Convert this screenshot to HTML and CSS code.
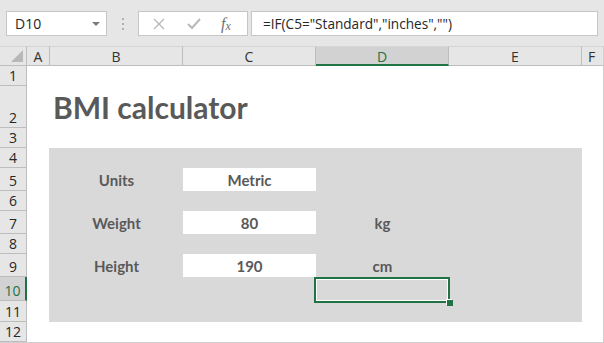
FILE: index.html
```html
<!DOCTYPE html>
<html>
<head>
<meta charset="utf-8">
<link rel="stylesheet" href="styles.css">
</head>
<body>
<div class="app">
  <div class="toolbar">
    <div class="namebox"><span class="nb-text">D10</span><span class="caret"></span></div>
    <div class="grip"><i></i><i></i><i></i></div>
    <div class="fbtns">
      <svg class="ico" width="12" height="12" viewBox="0 0 12 12"><path d="M1 1 L11 11 M11 1 L1 11" stroke="#b9b9b9" stroke-width="1.4" fill="none"/></svg>
      <svg class="ico" width="14" height="12" viewBox="0 0 14 12"><path d="M1 6 L5 10 L13 1" stroke="#b9b9b9" stroke-width="2" fill="none"/></svg>
      <span class="fx">f<span class="fx-x">x</span></span>
    </div>
    <div class="formula">=IF(C5="Standard","inches","")</div>
  </div>
  <div class="sheet">
    <div class="corner"><span class="tri"></span></div>
    <div class="ch">A</div>
    <div class="ch">B</div>
    <div class="ch">C</div>
    <div class="ch ch-sel">D</div>
    <div class="ch">E</div>
    <div class="ch ch-last">F</div>

    <div class="rh r1">1</div>
    <div class="rh r2">2</div>
    <div class="rh r3">3</div>
    <div class="rh r4">4</div>
    <div class="rh r5">5</div>
    <div class="rh r6">6</div>
    <div class="rh r7">7</div>
    <div class="rh r8">8</div>
    <div class="rh r9">9</div>
    <div class="rh r10 rh-sel">10</div>
    <div class="rh r11">11</div>
    <div class="rh r12">12</div>

    <div class="title">BMI calculator</div>
    <div class="panel"></div>

    <div class="cell label row5">Units</div>
    <div class="cell input row5">Metric</div>
    <div class="cell label row7">Weight</div>
    <div class="cell input row7">80</div>
    <div class="cell unit row7">kg</div>
    <div class="cell label row9">Height</div>
    <div class="cell input row9">190</div>
    <div class="cell unit row9">cm</div>

    <div class="selection"><span class="handle"></span></div>
  </div>
</div>
</body>
</html>
```

FILE: styles.css
```css
* { box-sizing: border-box; }
html, body { margin: 0; padding: 0; }
body { width: 604px; height: 343px; overflow: hidden; background: #ffffff; }
.app { width: 604px; height: 343px; display: flex; flex-direction: column; }

.toolbar {
  height: 46px;
  background: #e6e6e6;
  display: flex;
  align-items: flex-start;
  padding: 11px 0 0 6px;
}
.namebox {
  width: 101px;
  height: 25px;
  background: #fff;
  border: 1px solid #c6c6c6;
  display: flex;
  align-items: center;
  justify-content: space-between;
  padding: 0 5px 0 8px;
  font-family: "Open Sans", "Noto Sans", sans-serif;
  font-size: 14px;
  color: #262626;
}
.caret {
  width: 0; height: 0;
  border-left: 4px solid transparent;
  border-right: 4px solid transparent;
  border-top: 4px solid #7a7a7a;
  margin-right: 1px;
}
.grip {
  width: 31px;
  height: 25px;
  display: flex;
  flex-direction: column;
  align-items: center;
  justify-content: center;
  gap: 3px;
}
.grip i { display: block; width: 2px; height: 2px; background: #b0b0b0; }
.fbtns {
  width: 110px;
  height: 25px;
  background: #fff;
  border: 1px solid #c6c6c6;
  display: flex;
  align-items: center;
  padding: 0 0 0 14px;
}
.fbtns .ico:first-child { margin-right: 22px; }
.fbtns .ico:nth-child(2) { margin-right: 20px; }
.fx {
  font-family: "Liberation Serif", serif;
  font-style: italic;
  font-size: 16px;
  color: #6f6f6f;
}
.fx-x { font-size: 12px; position: relative; top: 1px; }
.formula {
  margin-left: 3px;
  width: 347px;
  height: 25px;
  background: #fff;
  border: 1px solid #c6c6c6;
  display: flex;
  align-items: center;
  padding-left: 11px;
  font-family: "Open Sans", "Noto Sans", sans-serif;
  font-size: 13.6px;
  color: #262626;
  white-space: nowrap;
}

.sheet {
  display: grid;
  grid-template-columns: 27px 23px 133px 133px 133px 133px 21px;
  grid-template-rows: 20px 20px 42px 20px 20px 23px 20px 23px 20px 23px 24px 21px 20px;
  width: 604px;
  border-right: 1px solid #d0d0d0;
  border-bottom: 1px solid #d0d0d0;
  font-family: "Open Sans", "Noto Sans", sans-serif;
}
.corner {
  grid-row: 1; grid-column: 1;
  background: #e6e6e6;
  border-right: 1px solid #bdbdbd;
  border-bottom: 1px solid #bdbdbd;
  border-top: 1px solid #d6d6d6;
  position: relative;
}
.tri {
  position: absolute;
  right: 3px; bottom: 3px;
  width: 0; height: 0;
  border-left: 12px solid transparent;
  border-bottom: 12px solid #b8b8b8;
}
.ch {
  grid-row: 1;
  background: #e6e6e6;
  border-right: 1px solid #bdbdbd;
  border-bottom: 1px solid #bdbdbd;
  border-top: 1px solid #d6d6d6;
  display: flex;
  align-items: center;
  justify-content: center;
  font-size: 14px;
  color: #333;
  padding-top: 1px;
}
.ch-last { border-right: none; justify-content: flex-start; padding-left: 6px; }
.ch-sel {
  background: #d2d2d2;
  color: #217346;
  border-bottom: 2px solid #217346;
}
.rh {
  grid-column: 1;
  background: #e6e6e6;
  border-right: 1px solid #bdbdbd;
  border-bottom: 1px solid #bdbdbd;
  display: flex;
  align-items: flex-end;
  justify-content: center;
  font-size: 14px;
  color: #262626;
  padding-bottom: 0;
  line-height: 18px;
}
.r1 { grid-row: 2; } .r2 { grid-row: 3; } .r3 { grid-row: 4; }
.r4 { grid-row: 5; } .r5 { grid-row: 6; } .r6 { grid-row: 7; }
.r7 { grid-row: 8; } .r8 { grid-row: 9; } .r9 { grid-row: 10; }
.r10 { grid-row: 11; } .r11 { grid-row: 12; } .r12 { grid-row: 13; }
.rh-sel {
  background: #d2d2d2;
  color: #217346;
  border-right: 2px solid #217346;
}

.title {
  grid-row: 3;
  grid-column: 3 / 6;
  align-self: end;
  padding: 0 0 3px 3px;
  font-family: "Lato", "Open Sans", sans-serif;
  font-weight: 700;
  font-size: 30px;
  line-height: 36px;
  color: #595959;
}
.panel {
  grid-row: 5 / 13;
  grid-column: 3 / 7;
  background: #d9d9d9;
  margin-left: -1px;
}
.cell {
  display: flex;
  align-items: center;
  justify-content: center;
  font-family: "Lato", "Open Sans", sans-serif;
  font-weight: 700;
  font-size: 15px;
  color: #595959;
}
.label { grid-column: 3; }
.input { grid-column: 4; background: #fff; }
.unit { grid-column: 5; }
.row5 { grid-row: 6; }
.row7 { grid-row: 8; }
.row9 { grid-row: 10; }

.selection {
  grid-row: 11;
  grid-column: 5;
  margin: 0 -1px -2px -2px;
  border: 2px solid #217346;
  box-shadow: inset 0 0 0 1px #ffffff;
  position: relative;
}
.handle {
  position: absolute;
  right: -5px;
  bottom: -5px;
  width: 6px;
  height: 6px;
  background: #217346;
  box-shadow: -1px -1px 0 0 #ffffff;
}
```
